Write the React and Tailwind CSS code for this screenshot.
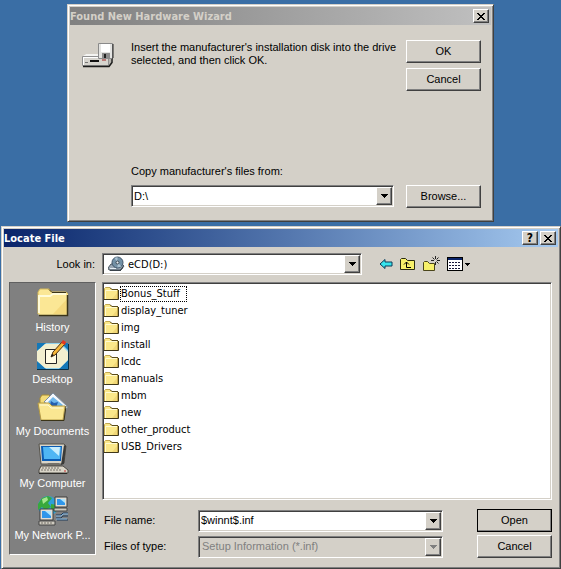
import React, { useState } from 'react';

const RAISED = 'border border-t-white border-l-white border-r-[#404040] border-b-[#404040] bg-[#d4d0c8] shadow-[inset_-1px_-1px_0_#808080]';
const SUNKEN = 'border border-t-[#808080] border-l-[#808080] border-r-white border-b-white shadow-[inset_1px_1px_0_#404040,inset_-1px_-1px_0_#d4d0c8]';
const WINDOW = 'border border-t-[#d4d0c8] border-l-[#d4d0c8] border-r-[#404040] border-b-[#404040] bg-[#d4d0c8] shadow-[inset_1px_1px_0_#ffffff,inset_-1px_-1px_0_#808080] p-0.5';

const FOLDERS = ['Bonus_Stuff', 'display_tuner', 'img', 'install', 'lcdc', 'manuals', 'mbm', 'new', 'other_product', 'USB_Drivers'];

const FolderIcon = () => (
  <svg width="16" height="16" viewBox="0 0 16 16" className="shrink-0" aria-hidden="true">
    <path d="M.5 13.500v-11l1-1h4l2 2h6v10z" fill="#fbe88a" stroke="#c4a84c" />
    <path d="M1.500 13V4.500H13" fill="none" stroke="#fffbd0" />
    <path d="M8 13l5-6v6z" fill="#f1d878" />
    <path d="M0 13.500h14.500V4" fill="none" stroke="#40381a" />
    <path d="M6 1.500l2 2h6" fill="none" stroke="#5a4c1c" />
  </svg>
);

const CdIcon = () => (
  <svg width="18" height="16" viewBox="0 0 18 16" className="ml-1 mt-px shrink-0" aria-hidden="true">
    <path d="M0 12l3-4h11l2 2-3 4H1z" fill="#9aa8b4" stroke="#4b5660" />
    <path d="M12 14l3-4v2l-3 3z" fill="#39424a" />
    <circle cx="9.5" cy="6.500" r="5.500" fill="#7391a6" stroke="#405468" />
    <path d="M9.500 6.500L6.500 2l3-1zM9.500 6.500l4 4-4 1z" fill="#a9c2d2" />
    <circle cx="9.500" cy="6.500" r="1.500" fill="#e8eef2" stroke="#3a4650" />
    <path d="M2 12.500h6" stroke="#e4edf4" />
    <path d="M2 14.500h11" stroke="#39424a" />
  </svg>
);

const HistoryIcon = () => (
  <svg width="32" height="32" viewBox="0 0 32 32" aria-hidden="true">
    <path d="M1 27V5l2-3h9l3 3h14l2 2v20l-1 1H2z" fill="#fbe795" />
    <path d="M1 27V5l2-3h9l3 3h14l2 2" fill="none" stroke="#d5b95a" />
    <path d="M2 26V9h11l3-2h13" fill="none" stroke="#fffbd8" strokeWidth="2" />
    <path d="M16 27L30 12v15z" fill="#f0cf6c" opacity=".6" />
    <path d="M2 28.500h28.500V8" fill="none" stroke="#3b3418" strokeWidth="1.500" />
    <path d="M12 2.500l3 3h14" fill="none" stroke="#3b3418" />
  </svg>
);

const DesktopIcon = () => (
  <svg width="32" height="32" viewBox="0 0 32 32" aria-hidden="true">
    <path d="M0 4h31v26H0z" fill="#8fd2ee" />
    <path d="M0 4h9L0 13zM31 21v9h-9zM0 21l9 9H0zM24 4h7v7z" fill="#1478b8" />
    <path d="M8 5h15l8 8v8l-8 8H8l-8-7V12z" fill="#f2efcf" />
    <path d="M0 30.500h31.500V5" fill="none" stroke="#083048" />
    <path d="M8.500 10.500h11v14h-11z" fill="#fffce4" stroke="#252525" />
    <path d="M14 18l2-5L25 3l3 2-10 11z" fill="#f6b738" stroke="#4a3010" />
    <path d="M24 4l2-3 3 2-1 3z" fill="#e23822" />
    <path d="M14 18l1-3 2 1z" fill="#111" />
  </svg>
);

const DocumentsIcon = () => (
  <svg width="32" height="32" viewBox="0 0 32 32" aria-hidden="true">
    <path d="M3 14V7l2-3h7l3 3v8z" fill="#f4dc7a" stroke="#a88c34" />
    <path d="M7 11l9-9 15 14-6 7z" fill="#f4f8fc" stroke="#7d8ea0" />
    <path d="M11 11l5-5 10 8-5 6z" fill="#6fb6ea" />
    <path d="M14 10l3 2 4-1-2 6-6-3z" fill="#245fae" />
    <path d="M1 12h11l3 3h13l-2 14H4z" fill="#fae792" stroke="#b59a44" />
    <path d="M3 14h8l3 3h12" fill="none" stroke="#fffbd6" />
    <path d="M4 29.500h23L29 15" fill="none" stroke="#3b3418" />
  </svg>
);

const ComputerIcon = () => (
  <svg width="32" height="32" viewBox="0 0 32 32" aria-hidden="true">
    <path d="M2 1h25l2 2-2 17-3 1H4z" fill="#d8d4c8" stroke="#55524a" />
    <path d="M27 2l2 1-2 18-3 1z" fill="#3a3a38" />
    <path d="M4 3h21l-1 15H5z" fill="#0a5cb4" />
    <path d="M6 4h18l-1 12H7z" fill="#4fb6f4" />
    <path d="M12 4h11l-1 9z" fill="#c8eefe" />
    <path d="M11 20h11l2 3H9z" fill="#74716a" />
    <path d="M4 23h22l5 4v3H2v-3z" fill="#dad5c8" stroke="#4b4842" />
    <path d="M5 25h17M4 27h20" stroke="#77736a" strokeDasharray="2 1" />
    <path d="M2 30.500h28" stroke="#2b2926" />
    <path d="M27 28h2" stroke="#c43030" />
  </svg>
);

const NetworkIcon = () => (
  <svg width="32" height="32" viewBox="0 0 32 32" aria-hidden="true">
    <circle cx="11" cy="11" r="10" fill="#2f9fd8" />
    <path d="M1 9l4-6 6-2 4 2-4 5 3 4-6 3-3-3-4 3zM14 9l6 1-1 7-5-3z" fill="#38a83c" />
    <path d="M5 4l5-2 1 3-5 4z" fill="#a5e58e" />
    <path d="M18 2h12v10H18z" fill="#e0ddd4" stroke="#3c3c3c" />
    <path d="M20 4h8v6h-8z" fill="#2f96ea" />
    <path d="M23 4h5v4z" fill="#aee4fc" />
    <path d="M17 13h13v3H17z" fill="#cfcbc0" stroke="#444" />
    <path d="M3 14h13v11H3z" fill="#e0ddd4" stroke="#3c3c3c" />
    <path d="M5 16h9v7H5z" fill="#2f96ea" />
    <path d="M8 16h6v5z" fill="#aee4fc" />
    <path d="M2 26h16v4H2z" fill="#cfcbc0" stroke="#444" />
    <path d="M4 28h12" stroke="#77736a" strokeDasharray="2 1" />
    <path d="M19 20h5l2-2h5M19 23h5l2-2h5M20 25h11" fill="none" stroke="#1f3a58" />
    <path d="M19 21h5l2-2h5M19 24h11" fill="none" stroke="#7fb4e0" />
  </svg>
);

const DiskDriveIcon = () => (
  <svg width="32" height="28" viewBox="0 0 32 28" className="shrink-0" aria-hidden="true">
    <path d="M0 16l4-4h25v9l-2 4H1z" fill="#b8b6b0" />
    <path d="M1 14l3-2h12v2z" fill="#f4f4f2" />
    <path d="M.5 14.500h26v9H.5z" fill="#d6d4ce" stroke="#909090" />
    <path d="M1 15.500h25M1.500 15v8" stroke="#fff" />
    <path d="M1 24.500h26l3-4V14" fill="none" stroke="#1c1c1c" strokeWidth="1.500" />
    <path d="M8 18h9v2H8z" fill="#111" />
    <path d="M16.500 1.500h14v14l-1 1h-13z" fill="#e4e4e2" stroke="#8a8a8a" />
    <path d="M19 2h9v8h-9z" fill="#fff" />
    <path d="M20 11h8v6h-8z" fill="#8c8c8c" />
    <path d="M22 12h2v4h-2z" fill="#222" />
    <path d="M31 2v14" stroke="#222" />
    <path d="M20 18h4" stroke="#a02020" />
    <path d="M3 20.500h3" stroke="#777" />
  </svg>
);

const BackIcon = () => (
  <svg width="14" height="14" viewBox="0 0 14 14" aria-hidden="true">
    <path d="M1 7l5-4.500V5h7v4H6v2.500z" fill="#36e4ec" stroke="#0a3a58" />
  </svg>
);

const UpIcon = () => (
  <svg width="16" height="14" viewBox="0 0 16 14" aria-hidden="true">
    <path d="M.5 12.500v-10l1-1h4l2 2h7v9z" fill="#f7f06a" stroke="#2b2b10" />
    <path d="M6.500 5v5.500H11M4 7.500l2.500-2.500L9 7.500" fill="none" stroke="#000" />
  </svg>
);

const NewFolderIcon = () => (
  <svg width="17" height="16" viewBox="0 0 17 16" aria-hidden="true">
    <path d="M.5 14.500v-8l1-1h3l2 2h5v7z" fill="#f7f06a" stroke="#4a451a" />
    <path d="M12.500 0v3M12.500 6v3M8 4.500h3M14 4.500h3M9.500 1.500l2 2M15.500 1.500l-2 2M15.500 7.500l-2-2" stroke="#222" />
  </svg>
);

const ViewIcon = () => (
  <svg width="24" height="14" viewBox="0 0 24 14" shapeRendering="crispEdges" aria-hidden="true">
    <path d="M.5.500h15v13H.5z" fill="#fff" stroke="#000" />
    <path d="M1 1h14v2H1z" fill="#0a246a" />
    <path d="M2 5.500h12M2 8.500h12M2 11.500h12" stroke="#16163a" strokeDasharray="2 1" />
    <path d="M18 6h5v1h-1v1h-1v1h-1V8h-1V7h-1z" fill="#000" />
  </svg>
);

const CloseGlyph = () => (
  <svg width="8" height="7" viewBox="0 0 8 7" shapeRendering="crispEdges" aria-hidden="true">
    <path d="M0 0h2v1h1v1h2V1h1V0h2v1H7v1H6v1H5v1h1v1h1v1h1v1H6V6H5V5H3v1H2v1H0V6h1V5h1V4h1V3H2V2H1V1H0z" fill="#000" />
  </svg>
);

const Arrow = ({ disabled }) => (
  <svg width="7" height="4" viewBox="0 0 7 4" shapeRendering="crispEdges" aria-hidden="true">
    <path d="M0 0h7v1H6v1H5v1H4v1H3V3H2V2H1V1H0z" fill={disabled ? '#808080' : '#000'} />
  </svg>
);

const PLACES = [
  { name: 'History', icon: HistoryIcon },
  { name: 'Desktop', icon: DesktopIcon },
  { name: 'My Documents', icon: DocumentsIcon },
  { name: 'My Computer', icon: ComputerIcon },
  { name: 'My Network P...', icon: NetworkIcon },
];

const Button = ({ children, isDefault }) => (
  <button type="button" className={`h-[23px] w-[75px] shrink-0 text-center ${RAISED} ${isDefault ? 'outline outline-black -outline-offset-1' : ''}`}>
    {children}
  </button>
);

const CaptionButton = ({ label, children }) => (
  <button type="button" aria-label={label} className={`flex h-3.5 w-4 items-center justify-center ${RAISED}`}>
    {children}
  </button>
);

const ComboBox = ({ id, value, onChange }) => (
  <div className={`flex h-[22px] min-w-0 flex-1 bg-white p-px ${SUNKEN}`}>
    <input id={id} value={value} onChange={(e) => onChange(e.target.value)} className="min-w-0 flex-1 bg-transparent px-px outline-none" />
    <button type="button" aria-label="Show list" className={`flex w-4 items-center justify-center ${RAISED}`}>
      <Arrow />
    </button>
  </div>
);

const SelectBox = ({ id, icon, disabled, children }) => (
  <div className={`flex h-[22px] min-w-0 flex-1 items-stretch p-px ${SUNKEN} ${disabled ? 'bg-[#d4d0c8] text-[#808080]' : 'bg-white'}`}>
    {icon}
    <div className="relative flex min-w-0 flex-1">
      <select id={id} disabled={disabled} className="w-full appearance-none bg-transparent pl-0.5 pr-4 opacity-100 outline-none">
        {children}
      </select>
      <span className={`pointer-events-none absolute inset-y-0 right-0 flex w-4 items-center justify-center ${RAISED}`}>
        <Arrow disabled={disabled} />
      </span>
    </div>
  </div>
);

const HardwareWizard = () => {
  const [path, setPath] = useState('D:\\');

  return (
    <section className={`mx-auto w-[427px] max-w-full ${WINDOW}`}>
      <header className="flex h-[18px] items-center bg-linear-to-r from-[#808080] to-[#c0c0c0] pr-0.5">
        <h1 className="flex-1 font-['DejaVu_Sans_Condensed',sans-serif] text-[11px] font-bold text-[#d4d0c8]">Found New Hardware Wizard</h1>
        <CaptionButton label="Close"><CloseGlyph /></CaptionButton>
      </header>
      <div className="pb-[11px] pl-2 pr-2.5 pt-[15px]">
        <div className="flex items-start">
          <div className="w-[53px] pl-1 pt-0.5"><DiskDriveIcon /></div>
          <p className="flex-1 pt-px">
            Insert the manufacturer's installation disk into the drive<br />
            selected, and then click OK.
          </p>
          <div className="flex flex-col gap-[5px]">
            <Button>OK</Button>
            <Button>Cancel</Button>
          </div>
        </div>
        <div className="mt-[74px] flex items-end gap-3 pl-[53px]">
          <div className="flex-1 pb-px">
            <label htmlFor="copy-from" className="mb-[7px] block">Copy manufacturer's files from:</label>
            <div className="flex"><ComboBox id="copy-from" value={path} onChange={setPath} /></div>
          </div>
          <Button>Browse...</Button>
        </div>
      </div>
    </section>
  );
};

const LocateFile = () => {
  const [fileName, setFileName] = useState('$winnt$.inf');

  return (
    <section className={`ml-px mt-1 ${WINDOW}`}>
      <header className="flex h-[18px] items-center gap-0.5 bg-linear-to-r from-[#0a246a] to-[#a6caf0] pr-0.5">
        <h2 className="flex-1 font-['DejaVu_Sans_Condensed',sans-serif] text-[11px] font-bold text-white">Locate File</h2>
        <CaptionButton label="Help"><span className="font-['DejaVu_Sans_Condensed',sans-serif] text-xs font-bold leading-3">?</span></CaptionButton>
        <CaptionButton label="Close"><CloseGlyph /></CaptionButton>
      </header>

      <div className="pb-2 pl-[5px] pr-1.5 pt-1.5">
        {/* Look in + toolbar */}
        <div className="flex items-center">
          <label htmlFor="look-in" className="w-[86px] text-right">Look in:</label>
          <div className="ml-[7px] flex w-[260px] font-['DejaVu_Sans_Condensed',sans-serif]">
            <SelectBox id="look-in" icon={<CdIcon />}>
              <option>eCD(D:)</option>
            </SelectBox>
          </div>
          <div className="ml-[17px] flex items-center gap-[7px]">
            <button type="button" aria-label="Back"><BackIcon /></button>
            <button type="button" aria-label="Up one level"><UpIcon /></button>
            <button type="button" aria-label="New folder"><NewFolderIcon /></button>
            <button type="button" aria-label="View menu"><ViewIcon /></button>
          </div>
        </div>

        <div className="mt-[7px] flex items-start gap-1.5">
          <nav className="flex w-[87px] shrink-0 flex-col gap-1 border border-l-[#606060] border-t-[#606060] border-b-white border-r-white bg-[#808080] pb-[11px] pt-1 text-white">
            {PLACES.map(({ name, icon: Icon }) => (
              <button key={name} type="button" className="flex h-12 flex-col items-center gap-0.5 whitespace-nowrap">
                <Icon />
                <span>{name}</span>
              </button>
            ))}
          </nav>

          <div className="min-w-0 flex-1">
            {/* Folder list */}
            <ul className={`h-[218px] bg-white px-px py-0.5 font-['DejaVu_Sans_Condensed',sans-serif] ${SUNKEN}`}>
              {FOLDERS.map((name, i) => (
                <li key={name} className="flex h-[17px] items-center">
                  <FolderIcon />
                  <span className={`border border-dotted pb-px ${i === 0 ? 'border-black pr-1.5' : 'border-transparent'}`}>{name}</span>
                </li>
              ))}
            </ul>

            <div className="mt-[9px] flex flex-col gap-[3px]">
              <div className="flex items-center">
                <label htmlFor="file-name" className="w-24 pl-0.5">File name:</label>
                <ComboBox id="file-name" value={fileName} onChange={setFileName} />
                <div className="ml-[34px] flex"><Button isDefault>Open</Button></div>
              </div>
              <div className="flex items-center">
                <label htmlFor="file-type" className="w-24 pl-0.5">Files of type:</label>
                <SelectBox id="file-type" disabled>
                  <option>Setup Information (*.inf)</option>
                </SelectBox>
                <div className="ml-[34px] flex"><Button>Cancel</Button></div>
              </div>
            </div>
          </div>
        </div>
      </div>
    </section>
  );
};

const App = () => (
  <main className="min-h-screen bg-[#3a6ea5] pt-1 font-['Liberation_Sans',Arial,sans-serif] text-[11px] leading-[13px] text-black">
    <HardwareWizard />
    <LocateFile />
  </main>
);

export default App;
